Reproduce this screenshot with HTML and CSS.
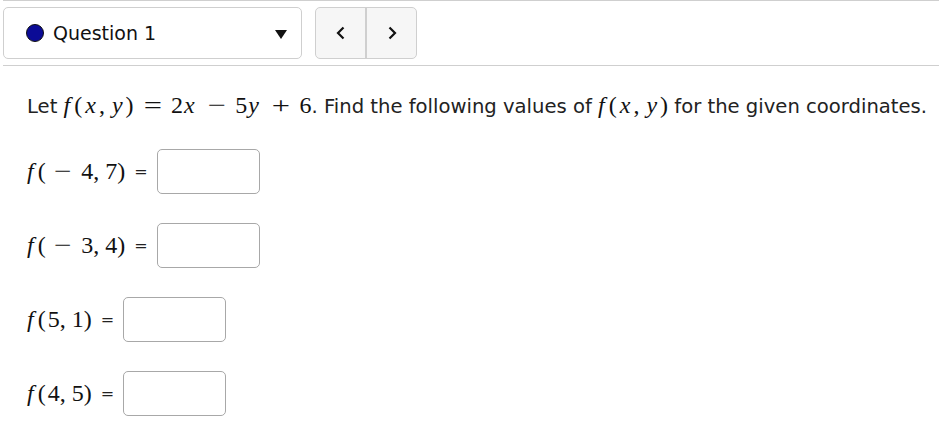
FILE: index.html
```html
<!DOCTYPE html>
<html>
<head>
<meta charset="utf-8">
<link rel="stylesheet" href="styles.css">
</head>
<body>
<div class="page">
  <div class="toolbar">
    <div class="select">
      <span class="dot"></span>
      <span class="qlabel">Question 1</span>
      <span class="caret"></span>
    </div>
    <div class="nav">
      <div class="navbtn">
        <svg width="12" height="14" viewBox="0 0 12 14"><path d="M8.5 1.5 L3 7 L8.5 12.5" fill="none" stroke="#111" stroke-width="2.2"/></svg>
      </div>
      <div class="navbtn">
        <svg width="12" height="14" viewBox="0 0 12 14"><path d="M3.5 1.5 L9 7 L3.5 12.5" fill="none" stroke="#111" stroke-width="2.2"/></svg>
      </div>
    </div>
  </div>
  <div class="content">
    <p class="prompt">Let <span class="m"><i class="f">f</i><span class="lp">(</span><i>x</i><span class="cm">,</span><i>y</i>)<span class="op">=</span>2<i>x</i><span class="op">−</span>5<i>y</i><span class="op">+</span>6</span>. Find the following values of <span class="m"><i class="f">f</i><span class="lp">(</span><i>x</i><span class="cm">,</span><i>y</i>)</span> for the given coordinates.</p>
    <div class="rows">
      <div class="row">
        <span class="m"><i class="f">f</i><span class="lp">(</span><span class="neg">−</span>4<span class="cm">,</span>7)</span><span class="eq">=</span><span class="box"></span>
      </div>
      <div class="row">
        <span class="m"><i class="f">f</i><span class="lp">(</span><span class="neg">−</span>3<span class="cm">,</span>4)</span><span class="eq">=</span><span class="box"></span>
      </div>
      <div class="row">
        <span class="m"><i class="f">f</i><span class="lp">(</span>5<span class="cm">,</span>1)</span><span class="eq">=</span><span class="box"></span>
      </div>
      <div class="row">
        <span class="m"><i class="f">f</i><span class="lp">(</span>4<span class="cm">,</span>5)</span><span class="eq">=</span><span class="box"></span>
      </div>
    </div>
  </div>
</div>
</body>
</html>
```
FILE: styles.css
```css
html, body {
  margin: 0;
  padding: 0;
  background: #fff;
}
.page {
  margin-left: 3px;
  border-top: 1px solid #cfcfcf;
  font-family: "DejaVu Sans", Verdana, sans-serif;
  color: #222;
}
.toolbar {
  display: flex;
  align-items: center;
  gap: 13px;
  padding-top: 6px;
  padding-bottom: 6px;
  border-bottom: 1px solid #cfcfcf;
}
.select {
  box-sizing: border-box;
  width: 299px;
  height: 52px;
  border: 1px solid #cfcfcf;
  border-radius: 5px;
  display: flex;
  align-items: center;
  padding-left: 22px;
  padding-right: 14px;
}
.dot {
  width: 16px;
  height: 16px;
  border-radius: 50%;
  background: #0b0b96;
  border: 1px solid #111;
  flex: none;
}
.qlabel {
  margin-left: 9px;
  font-size: 19px;
  color: #111;
  flex: 1;
}
.caret {
  width: 0;
  height: 0;
  border-left: 6px solid transparent;
  border-right: 6px solid transparent;
  border-top: 9px solid #111;
  margin-top: 2px;
}
.nav {
  box-sizing: border-box;
  width: 102px;
  height: 52px;
  border: 1px solid #cfcfcf;
  border-radius: 5px;
  background: #f6f6f6;
  display: flex;
}
.navbtn {
  flex: 1;
  display: flex;
  align-items: center;
  justify-content: center;
}
.navbtn + .navbtn {
  border-left: 2px solid #cfcfcf;
}
.content {
  padding-left: 24px;
}
.prompt {
  margin: 24px 0 0 0;
  font-size: 19.6px;
  line-height: 30px;
}
.m {
  font-family: "Liberation Serif", "Times New Roman", serif;
  font-size: 24px;
  color: #111;
}
.m i {
  font-style: italic;
  padding-right: 3px;
  padding-left: 1px;
}
.m i.f {
  padding-left: 0;
  padding-right: 4px;
}
.lp {
  padding-right: 2px;
}
.cm {
  padding-right: 6px;
}
.op {
  display: inline-block;
  margin: 0 12px;
  transform: scaleX(1.35);
}
.neg {
  display: inline-block;
  margin: 0 12px 0 8px;
  transform: scaleX(1.3);
}
.rows {
  display: flex;
  flex-direction: column;
  gap: 29px;
  margin-top: 27px;
}
.row {
  display: flex;
  align-items: center;
  height: 45px;
}
.eq {
  font-size: 16px;
  margin: 0 9px 0 9px;
}
.box {
  box-sizing: border-box;
  width: 103px;
  height: 45px;
  border: 1px solid #a8a8a8;
  border-radius: 5px;
  background: #fff;
}
```
